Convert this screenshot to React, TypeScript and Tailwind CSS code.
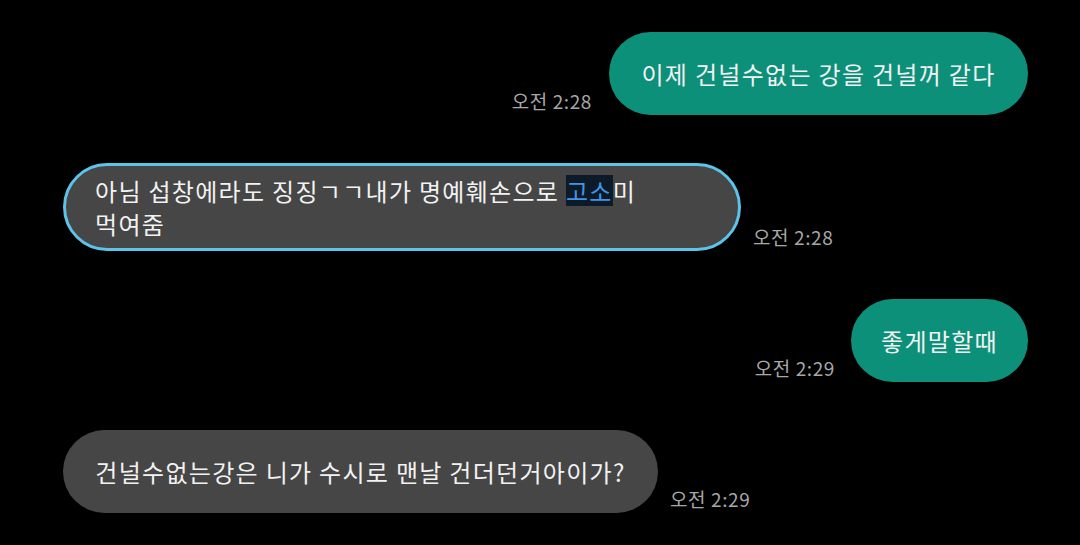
const font = "font-['Noto_Sans_CJK_KR','Noto_Sans',sans-serif]";

function Time({ children }: { children: string }) {
  return <span className="mb-[3px] shrink-0 text-[19px] leading-[22px] tracking-[0.6px] text-[#a8a8a8]">{children}</span>;
}

export default function App() {
  return (
    <div className={`${font} min-h-[545px] w-full bg-black pt-8 pl-[63px] pr-[52px] text-[#f2f2f2]`}>
      <div className="flex flex-col gap-12 tracking-[1.3px]">
        <div className="flex items-end justify-end gap-[17px]">
          <Time>오전 2:28</Time>
          <div className="flex h-[83px] w-[419px] items-center justify-center rounded-full bg-[#0c9079] text-[24px]">
            이제 건널수없는 강을 건널꺼 같다
          </div>
        </div>

        <div className="flex items-end gap-3">
          <div className="w-[678px] rounded-full border-[3px] border-[#5cc3ea] bg-[#464646] py-[8px] pl-[29px] text-[24px] leading-[33px]">
            아님 섭창에라도 징징ㄱㄱ내가 명예훼손으로{' '}
            <span className="inline-block bg-[#0d1a27] leading-[31px] text-[#4393e6]">고소</span>미
            <br />
            먹여줌
          </div>
          <Time>오전 2:28</Time>
        </div>

        <div className="flex items-end justify-end gap-4">
          <Time>오전 2:29</Time>
          <div className="flex h-[83px] w-[177px] items-center justify-center rounded-full bg-[#0c9079] text-[24px]">
            좋게말할때
          </div>
        </div>

        <div className="flex items-end gap-3">
          <div className="flex h-[83px] w-[595px] items-center justify-center rounded-full bg-[#464646] text-[24px]">
            건널수없는강은 니가 수시로 맨날 건더던거아이가?
          </div>
          <Time>오전 2:29</Time>
        </div>
      </div>
    </div>
  );
}
